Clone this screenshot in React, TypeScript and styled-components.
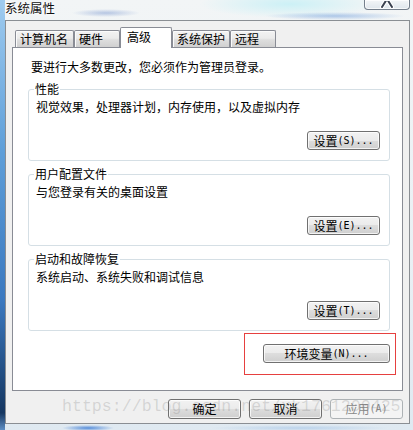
import React from "react";
import styled, { createGlobalStyle } from "styled-components";

const CJK = `"Noto Sans CJK SC", "Noto Sans", sans-serif`;

const Global = createGlobalStyle`
  html, body { margin: 0; padding: 0; background: #e9eff3; }
  * { box-sizing: border-box; }
`;

const Root = styled.div`
  position: relative;
  width: 413px;
  height: 430px;
  overflow: hidden;
  display: flex;
  flex-direction: column;
  font-family: ${CJK};
  font-size: 12px;
  color: #000;
  background:
    radial-gradient(ellipse 34px 4px at 106px 13px, rgba(70, 110, 190, 0.35), transparent),
    radial-gradient(ellipse 70px 4px at 335px 16px, rgba(70, 130, 210, 0.4), transparent),
    radial-gradient(ellipse 26px 3px at 88px 428px, rgba(40, 110, 210, 0.75), transparent),
    radial-gradient(ellipse 90px 3px at 300px 428px, rgba(120, 170, 225, 0.35), transparent),
    radial-gradient(ellipse 90px 14px at 290px 4px, rgba(200, 240, 246, 0.9), transparent),
    linear-gradient(to bottom, #9fcbef 0%, #5f9fd9 35%, #3a78bf 70%, #163761 96%, #5d8ec4 100%) 0 0 / 5px 100% no-repeat,
    linear-gradient(to bottom, #f2f5f6 0%, #e9f0f4 60%, #dfe9f1 100%);
`;

const TitleBar = styled.div`
  height: 20px;
  flex-shrink: 0;
  display: flex;
  align-items: flex-start;
  justify-content: space-between;
  padding: 0 3px 0 5px;
`;

const Title = styled.div`
  margin-top: 1px;
  font-size: 12.5px;
  line-height: 13px;
  color: #111;
  text-shadow: 0 0 5px #fff, 0 0 3px #fff, 0 0 2px #fff;
`;

const CloseButton = styled.div`
  width: 46px;
  height: 10px;
  border: 1px solid #747f8c;
  border-top: none;
  border-radius: 0 0 4px 4px;
  background: linear-gradient(to bottom, #f3f6f8, #dfe6ec);
  box-shadow: inset 0 0 0 1px rgba(255, 255, 255, 0.7);
  display: flex;
  justify-content: center;
  align-items: flex-end;
  overflow: hidden;
`;

const Client = styled.div`
  margin: 0 3px 0 5px;
  height: 404px;
  flex-shrink: 0;
  border: 1px solid #8a8e93;
  background: #f0f0f0;
  display: flex;
  flex-direction: column;
  padding: 0 6px 4px 6px;
`;

const TabStrip = styled.div`
  height: 26px;
  display: flex;
  align-items: flex-end;
  padding-left: 3px;
`;

const Tab = styled.div<{ $active?: boolean; $w: number }>`
  position: relative;
  z-index: ${(p) => (p.$active ? 1 : 0)};
  width: ${(p) => p.$w}px;
  height: ${(p) => (p.$active ? 21 : 17)}px;
  margin-bottom: ${(p) => (p.$active ? -1 : 0)}px;
  border: 1px solid #898c95;
  border-bottom: none;
  border-radius: 2px 2px 0 0;
  background: ${(p) =>
    p.$active
      ? "#ffffff"
      : "linear-gradient(to bottom, #f3f3f3 0%, #ebebeb 45%, #dedede 55%, #d0d0d0 100%)"};
  box-shadow: ${(p) => (p.$active ? "none" : "inset 1px 1px 0 #fbfbfb")};
  padding: ${(p) => (p.$active ? "0 0 2px 6px" : "0 0 0 4px")};
  display: flex;
  align-items: center;
  font-size: 12px;
  line-height: 14px;
  white-space: nowrap;
`;

const Panel = styled.div`
  height: 344px;
  flex-shrink: 0;
  background: #ffffff;
  border: 1px solid #898c95;
  padding: 11px 12px 0 15px;
  display: flex;
  flex-direction: column;
`;

const Intro = styled.div`
  margin-left: 3px;
  line-height: 16px;
  white-space: nowrap;
`;

const Group = styled.fieldset<{ $gap: number }>`
  margin: ${(p) => p.$gap}px 0 0 0;
  padding: 0 9px 10px 7px;
  border: 1px solid #d5dfe5;
  border-radius: 3px;
  min-width: 0;
  display: flex;
  flex-direction: column;
`;

const Legend = styled.legend`
  padding: 0 1px;
  margin-left: -2px;
  font-size: 12px;
  line-height: 16px;
`;

const Desc = styled.div`
  margin-top: 2px;
  line-height: 16px;
  white-space: nowrap;
`;

const GroupActions = styled.div`
  margin-top: 16px;
  display: flex;
  justify-content: flex-end;
`;

const Button = styled.button<{ $w: number; $h: number }>`
  width: ${(p) => p.$w}px;
  height: ${(p) => p.$h}px;
  padding: 0;
  border: 1px solid #707070;
  border-radius: 3px;
  background: linear-gradient(to bottom, #f2f2f2 0%, #ebebeb 50%, #dddddd 50%, #cfcfcf 100%);
  box-shadow: inset 0 0 0 1px rgba(255, 255, 255, 0.75);
  font-family: ${CJK};
  font-size: 12px;
  line-height: 14px;
  color: #000;
  display: flex;
  align-items: center;
  justify-content: center;
  white-space: nowrap;

  &:disabled {
    border-color: #adb2b5;
    background: #f4f4f4;
    box-shadow: none;
    color: #8a8a8a;
  }
`;

const Mnemonic = styled.span`
  font-family: "DejaVu Sans Mono", "Liberation Mono", monospace;
  font-size: 10px;
  letter-spacing: 0;
`;

const Highlight = styled.div`
  align-self: flex-end;
  margin: 2px -6px 0 0;
  border: 1px solid #e6403f;
  padding: 10px 5px 11px 18px;
`;

const FooterRow = styled.div`
  margin-top: 8px;
  display: flex;
  justify-content: flex-end;
  gap: 8px;
`;

const Watermark = styled.div`
  position: absolute;
  left: 62px;
  top: 397px;
  font-family: "Liberation Mono", monospace;
  font-size: 16.6px;
  line-height: 20px;
  color: rgba(110, 110, 110, 0.22);
  white-space: nowrap;
  pointer-events: none;
`;

const CloseGlyph = () => (
  <svg width="14" height="8" viewBox="0 0 14 8">
    <path d="M7 -2 L2 6 M7 -2 L12 6" stroke="#ffffff" strokeWidth="4" strokeLinecap="round" fill="none" />
    <path d="M7 -2 L2 6 M7 -2 L12 6" stroke="#3b4250" strokeWidth="2" strokeLinecap="round" fill="none" />
  </svg>
);

const tabs = [
  { label: "计算机名", w: 59 },
  { label: "硬件", w: 46 },
  { label: "高级", w: 52, active: true },
  { label: "系统保护", w: 58 },
  { label: "远程", w: 46 },
];

const groups = [
  { title: "性能", desc: "视觉效果，处理器计划，内存使用，以及虚拟内存", key: "S", gap: 6 },
  { title: "用户配置文件", desc: "与您登录有关的桌面设置", key: "E", gap: 5 },
  { title: "启动和故障恢复", desc: "系统启动、系统失败和调试信息", key: "T", gap: 5 },
];

export default function App() {
  return (
    <Root>
      <Global />
      <TitleBar>
        <Title>系统属性</Title>
        <CloseButton>
          <CloseGlyph />
        </CloseButton>
      </TitleBar>
      <Client>
        <TabStrip>
          {tabs.map((t) => (
            <Tab key={t.label} $w={t.w} $active={t.active}>
              {t.label}
            </Tab>
          ))}
        </TabStrip>
        <Panel>
          <Intro>要进行大多数更改，您必须作为管理员登录。</Intro>
          {groups.map((g) => (
            <Group key={g.title} $gap={g.gap}>
              <Legend>{g.title}</Legend>
              <Desc>{g.desc}</Desc>
              <GroupActions>
                <Button $w={73} $h={19}>
                  设置<Mnemonic>({g.key})...</Mnemonic>
                </Button>
              </GroupActions>
            </Group>
          ))}
          <Highlight>
            <Button $w={127} $h={19}>
              环境变量<Mnemonic>(N)...</Mnemonic>
            </Button>
          </Highlight>
        </Panel>
        <FooterRow>
          <Button $w={73} $h={20}>确定</Button>
          <Button $w={73} $h={20}>取消</Button>
          <Button $w={73} $h={20} disabled>
            应用<Mnemonic>(A)</Mnemonic>
          </Button>
        </FooterRow>
      </Client>
      <Watermark>https://blog.csdn.net/xk1761200425</Watermark>
    </Root>
  );
}
